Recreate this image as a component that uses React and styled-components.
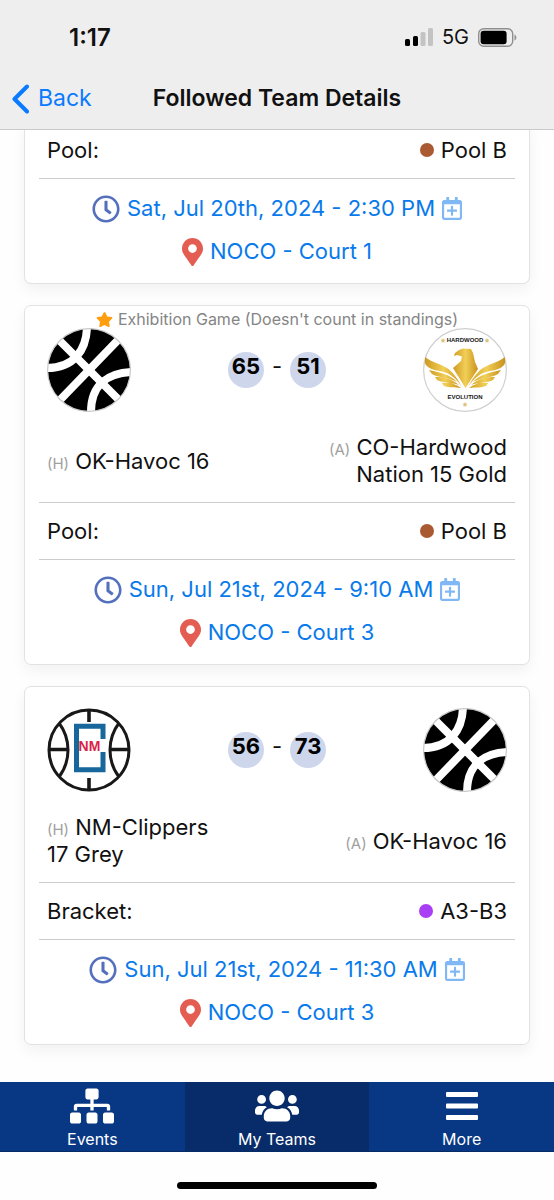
import React from "react";
import styled, { createGlobalStyle } from "styled-components";
import {
  FaRegClock,
  FaRegCalendarPlus,
  FaMapMarkerAlt,
  FaStar,
  FaSitemap,
  FaUsers,
} from "react-icons/fa";

const GlobalStyle = createGlobalStyle`
  * { box-sizing: border-box; }
  body {
    margin: 0;
    background: #fefefe;
    color: #111;
    font-family: Inter, "Liberation Sans", sans-serif;
    font-size: 22px;
    line-height: 27px;
  }
`;

const Screen = styled.div`
  display: flex;
  flex-direction: column;
  min-height: 100vh;
`;

const Header = styled.header`
  position: sticky;
  top: 0;
  z-index: 1;
  background: #eeeeee;
  border-bottom: 1px solid #c9c9cd;
`;

const StatusBar = styled.div`
  display: flex;
  align-items: center;
  justify-content: space-between;
  height: 74px;
  padding: 0 37px 0 69px;
`;

const Time = styled.span`
  font-size: 24px;
  font-weight: 600;
`;

const StatusIcons = styled.div`
  display: flex;
  align-items: center;
  gap: 9px;
  font-size: 20px;
`;

const TitleBar = styled.div`
  display: grid;
  grid-template-columns: 1fr auto 1fr;
  align-items: center;
  height: 55px;
  padding: 0 12px 6px;
`;

const BackButton = styled.button`
  display: flex;
  align-items: center;
  gap: 9px;
  justify-self: start;
  padding: 0;
  border: 0;
  background: none;
  color: #0a7aff;
  font-family: inherit;
  font-size: 23px;
  line-height: 27px;
`;

const Title = styled.h1`
  margin: 0;
  font-size: 23px;
  font-weight: 600;
`;

const Games = styled.main`
  display: flex;
  flex: 1;
  flex-direction: column;
  gap: 21px;
  margin-top: -8px;
  padding: 0 24px 35px;
`;

const Card = styled.article`
  padding: 0 14px 10px;
  border: 1px solid #e2e2e2;
  border-top-width: ${(p) => (p.$scrolled ? 0 : 1)}px;
  border-radius: ${(p) => (p.$scrolled ? "0 0 7px 7px" : "7px")};
  background: #fff;
  box-shadow: 0 6px 14px rgba(0, 0, 0, 0.05);
`;

const Note = styled.p`
  display: flex;
  justify-content: center;
  gap: 5px;
  min-height: 21px;
  margin: 0;
  padding-top: 5px;
  color: #858585;
  font-size: 16px;
  line-height: 16px;
`;

const ScoreRow = styled.div`
  display: flex;
  align-items: center;
  justify-content: space-between;
  padding: 0 8px;
`;

const Score = styled.div`
  display: flex;
  align-items: flex-start;
  gap: 8px;
  line-height: 29px;
`;

const Points = styled.strong`
  width: 36px;
  height: 36px;
  border-radius: 50%;
  background: #cdd6eb;
  color: #000;
  font-weight: 700;
  text-align: center;
`;

const Teams = styled.div`
  display: flex;
  align-items: center;
  justify-content: space-between;
  min-height: 91px;
  padding: 22px 8px 14px;
  border-bottom: 1px solid #cccccc;
`;

const Team = styled.div`
  width: 40%;
  text-align: ${(p) => (p.$away ? "right" : "left")};
`;

const Side = styled.span`
  color: #a0a0a0;
  font-size: 15px;
  line-height: 15px;
`;

const PoolRow = styled.div`
  display: flex;
  align-items: center;
  justify-content: space-between;
  height: 57px;
  padding: 0 8px;
  border-bottom: 1px solid #cccccc;
`;

const PoolName = styled.span`
  display: flex;
  align-items: center;
  gap: 7px;
`;

const Dot = styled.span`
  width: 14px;
  height: 14px;
  border-radius: 50%;
  background: ${(p) => p.$color};
`;

const Links = styled.div`
  display: flex;
  flex-direction: column;
  align-items: center;
  padding-top: 8px;
`;

const InfoLink = styled.a`
  display: flex;
  align-items: center;
  gap: 7px;
  height: 43px;
  color: #087aeb;
  text-decoration: none;
  white-space: nowrap;
`;

const PinIcon = styled(FaMapMarkerAlt)`
  width: 21px;
  height: 28px;
  color: #e45d52;
`;

const CalendarIcon = styled(FaRegCalendarPlus)`
  width: 20px;
  height: 23px;
  color: #80b8f5;
`;

const TabBar = styled.nav`
  display: flex;
  background: #083884;
`;

const Tab = styled.button`
  display: flex;
  flex: 1;
  flex-direction: column;
  align-items: center;
  height: 70px;
  padding: 1px 0 0;
  border: 0;
  border-bottom: 1px solid #062a66;
  background: ${(p) => (p.$active ? "#072c69" : "#083884")};
  color: #fff;
  font-family: inherit;
  font-size: 16px;
  line-height: 20px;
`;

const TabIcon = styled.span`
  display: flex;
  align-items: center;
  justify-content: center;
  height: 46px;
`;

const HomeArea = styled.div`
  display: flex;
  justify-content: center;
  height: 48px;
  padding-top: 30px;
`;

const HomeIndicator = styled.div`
  width: 36%;
  height: 7px;
  border-radius: 4px;
  background: #000;
`;

const Signal = () => (
  <svg width="28" height="18" viewBox="0 0 28 18" aria-label="Signal">
    <rect x="0" y="11" width="5" height="7" rx="1.5" />
    <rect x="8" y="8" width="5" height="10" rx="1.5" />
    <rect x="15.5" y="4" width="5" height="14" rx="1.5" fill="#c3c3c3" />
    <rect x="23" y="0" width="5" height="18" rx="1.5" fill="#c3c3c3" />
  </svg>
);

const Battery = () => (
  <svg width="39" height="19" viewBox="0 0 39 19" aria-label="Battery">
    <rect x="0.7" y="0.7" width="34" height="17.6" rx="5" fill="none" stroke="#8f8f8f" strokeWidth="1.4" />
    <rect x="2.6" y="2.8" width="26" height="13.4" rx="3" />
    <path d="M36.5 6.5c2.4 1 2.4 5 0 6z" fill="#8f8f8f" />
  </svg>
);

const HavocLogo = () => (
  <svg width="84" height="84" viewBox="0 0 84 84" aria-label="OK-Havoc logo">
    <circle cx="42" cy="42" r="41.4" />
    <g fill="none" stroke="#fff" strokeWidth="8">
      <path d="M12 12 72 72" />
      <path d="M72 11 13 72" />
      <path d="M40 0C39 22 27 40 0 40" />
      <path d="M84 44C62 45 44 56 44 84" />
    </g>
    <circle cx="42" cy="42" r="41.4" fill="none" stroke="#c8c8c8" strokeWidth="1.2" />
  </svg>
);

const ClippersLogo = () => (
  <svg width="84" height="84" viewBox="0 0 84 84" aria-label="NM-Clippers logo">
    <g fill="none" stroke="#181818" strokeWidth="3">
      <circle cx="42" cy="42" r="40" />
      <path d="M12 15C24 31 24 53 12 69M72 15C60 31 60 53 72 69" />
      <path d="M1 41.5H21M63 41.5H83M42 1V14M42 70V83" strokeWidth="3.6" />
    </g>
    <path d="M56 31V18.3H29.5V61.7H56V44" fill="none" stroke="#17679c" strokeWidth="5" />
    <text
      x="42.5"
      y="38"
      textAnchor="middle"
      fontFamily="'Liberation Sans', sans-serif"
      fontSize="14"
      fontWeight="700"
      dominantBaseline="central"
      fill="#db1f4a"
    >
      NM
    </text>
  </svg>
);

const HardwoodLogo = () => (
  <svg width="84" height="84" viewBox="0 0 84 84" aria-label="Hardwood Evolution logo">
    <defs>
      <linearGradient id="gold" x1="0" x2="1">
        <stop offset="0" stopColor="#cf9a20" />
        <stop offset="0.5" stopColor="#f1cf57" />
        <stop offset="1" stopColor="#c9921c" />
      </linearGradient>
    </defs>
    <circle cx="42" cy="42" r="41.4" fill="#fff" stroke="#cfcfcf" strokeWidth="1.2" />
    <g fill="url(#gold)">
      <path d="M36 22 40 20.5 48 21 50 25 52 34 55 41 42.5 60 30 40 38 33 39 28.5 34 27 31 28 32 25Z" />
      <path d="M2 29C10 35 18 36 24 40 30 44 34 50 39 59 33 50 27 45 17 43 9 42 3 39 2 35Z" />
      <path d="M6 42C18 45 27 46 34 54 26 49 15 50 9 46ZM12 49C22 49 29 51 36 57 28 54 20 55 14 52ZM19 55C27 54 33 56 38 60 31 59 26 60 21 58Z" />
      <path d="M82 29C74 35 66 36 60 40 54 44 50 50 45 59 51 50 57 45 67 43 75 42 81 39 82 35Z" />
      <path d="M78 42C66 45 57 46 50 54 58 49 69 50 75 46ZM72 49C62 49 55 51 48 57 56 54 64 55 70 52ZM65 55C57 54 51 56 46 60 53 59 58 60 63 58Z" />
    </g>
    <g fill="#dcc27c">
      <path id="logo-star" d="m20 10 .8 1.6 1.7.2-1.2 1.2.3 1.7-1.6-.8-1.6.8.3-1.7-1.2-1.2 1.7-.2Z" />
      <use href="#logo-star" x="44" />
      <use href="#logo-star" x="22" y="64" />
    </g>
    <g
      fontFamily="'Liberation Sans', sans-serif"
      fontSize="6"
      fontWeight="700"
      textAnchor="middle"
      fill="#151515"
    >
      <text x="42" y="14">HARDWOOD</text>
      <text x="42" y="71">EVOLUTION</text>
    </g>
  </svg>
);

const GameDetails = ({ label, pool, color, date, court }) => (
  <>
    <PoolRow>
      <span>{label}:</span>
      <PoolName>
        <Dot $color={color} />
        {pool}
      </PoolName>
    </PoolRow>
    <Links>
      <InfoLink href="#calendar">
        <FaRegClock size={28} color="#5470bd" />
        {date}
        <CalendarIcon />
      </InfoLink>
      <InfoLink href="#map">
        <PinIcon />
        {court}
      </InfoLink>
    </Links>
  </>
);

const Game = ({ note, home, away, ...details }) => (
  <Card>
    <Note>
      {note && <FaStar size={17} color="#ff9f0f" />}
      {note}
    </Note>
    <ScoreRow>
      <home.Logo />
      <Score>
        <Points>{home.score}</Points>
        <span>-</span>
        <Points>{away.score}</Points>
      </Score>
      <away.Logo />
    </ScoreRow>
    <Teams>
      <Team>
        <Side>(H)</Side> {home.name}
      </Team>
      <Team $away>
        <Side>(A)</Side> {away.name}
      </Team>
    </Teams>
    <GameDetails {...details} />
  </Card>
);

export default function App() {
  return (
    <Screen>
      <GlobalStyle />
      <Header>
        <StatusBar>
          <Time>1:17</Time>
          <StatusIcons>
            <Signal />
            <span>5G</span>
            <Battery />
          </StatusIcons>
        </StatusBar>
        <TitleBar>
          <BackButton type="button">
            <svg width="17" height="30" viewBox="0 0 17 30" aria-hidden="true">
              <path d="M15 2.5 2.5 15 15 27.5" fill="none" stroke="currentColor" strokeWidth="4" strokeLinecap="round" strokeLinejoin="round" />
            </svg>
            Back
          </BackButton>
          <Title>Followed Team Details</Title>
        </TitleBar>
      </Header>
      <Games>
        <Card $scrolled>
          <GameDetails
            label="Pool"
            pool="Pool B"
            color="#aa5a32"
            date="Sat, Jul 20th, 2024 - 2:30 PM"
            court="NOCO - Court 1"
          />
        </Card>
        <Game
          note="Exhibition Game (Doesn't count in standings)"
          home={{ name: "OK-Havoc 16", score: 65, Logo: HavocLogo }}
          away={{ name: "CO-Hardwood Nation 15 Gold", score: 51, Logo: HardwoodLogo }}
          label="Pool"
          pool="Pool B"
          color="#aa5a32"
          date="Sun, Jul 21st, 2024 - 9:10 AM"
          court="NOCO - Court 3"
        />
        <Game
          home={{ name: "NM-Clippers 17 Grey", score: 56, Logo: ClippersLogo }}
          away={{ name: "OK-Havoc 16", score: 73, Logo: HavocLogo }}
          label="Bracket"
          pool="A3-B3"
          color="#a93ff5"
          date="Sun, Jul 21st, 2024 - 11:30 AM"
          court="NOCO - Court 3"
        />
      </Games>
      <TabBar>
        <Tab type="button">
          <TabIcon>
            <FaSitemap size={44} />
          </TabIcon>
          Events
        </Tab>
        <Tab type="button" $active>
          <TabIcon>
            <FaUsers size={44} />
          </TabIcon>
          My Teams
        </Tab>
        <Tab type="button">
          <TabIcon>
            <svg width="32" height="28" viewBox="0 0 32 28" fill="currentColor" aria-hidden="true">
              <rect width="32" height="5" rx="1" />
              <rect y="11.5" width="32" height="5" rx="1" />
              <rect y="23" width="32" height="5" rx="1" />
            </svg>
          </TabIcon>
          More
        </Tab>
      </TabBar>
      <HomeArea>
        <HomeIndicator />
      </HomeArea>
    </Screen>
  );
}
